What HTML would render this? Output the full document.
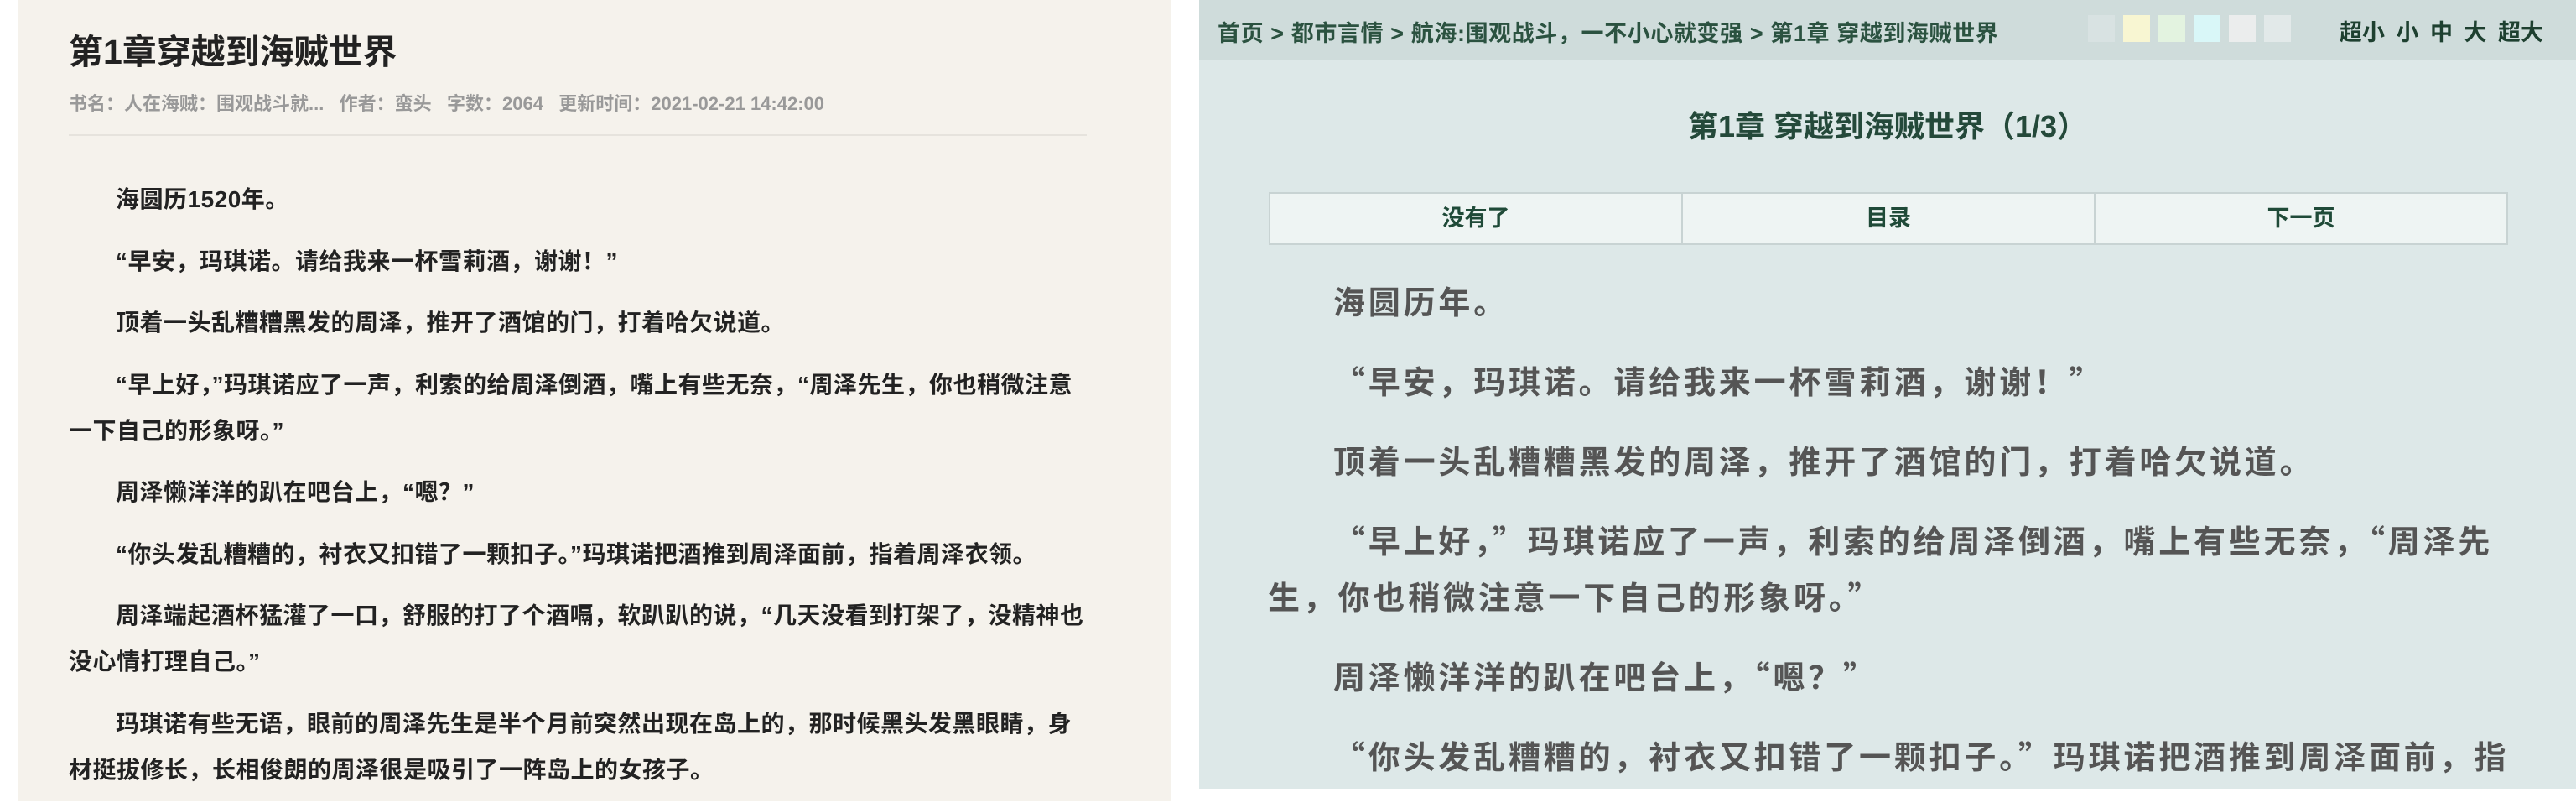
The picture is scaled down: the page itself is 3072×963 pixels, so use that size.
<!DOCTYPE html>
<html><head><meta charset="utf-8"><style>
*{margin:0;padding:0;box-sizing:border-box}
body{width:3072px;height:955px;background:#fff;position:relative;overflow:hidden;font-family:"Liberation Sans","Noto Sans CJK SC",sans-serif}
#L{position:absolute;left:22px;top:0;width:1374px;height:955px;background:#f5f2ec}
#L h1{position:absolute;left:60px;top:28px;font-size:41px;font-weight:bold;color:#222;white-space:nowrap}
#L .meta{position:absolute;left:60px;top:106px;font-size:22px;font-weight:bold;color:#999;white-space:nowrap}
#L .line{position:absolute;left:60px;top:160px;width:1214px;height:2px;background:#e6e3dd}
#L .txt{position:absolute;left:60px;top:210px;width:1260px}
#L p{font-size:28px;font-weight:bold;color:#222;line-height:55px;margin-bottom:18.5px;text-indent:56px;white-space:nowrap;letter-spacing:0.5px}
#R{position:absolute;left:1430px;top:0;width:1642px;height:940px;background:#dde8e8;overflow:hidden}
#bar{position:absolute;left:0;top:0;width:1642px;height:72px;background:#cfdcdb}
#bc{position:absolute;left:22px;top:18px;font-size:27px;font-weight:bold;color:#2b5240;white-space:nowrap;letter-spacing:0.6px}
.sw{position:absolute;top:18px;width:32px;height:32px}
#fs{position:absolute;left:1360px;top:17px;font-size:27px;font-weight:bold;color:#1e4030;white-space:nowrap;word-spacing:6px}
#R h2{position:absolute;left:0;width:1642px;text-align:center;top:122px;font-size:36px;font-weight:bold;color:#24493a}
#nav{position:absolute;left:83px;top:229px;width:1478px;height:63px;display:flex;border:2px solid #c8d3d3;background:#eef4f3}
#nav div{flex:1;text-align:center;line-height:59px;font-size:27px;font-weight:bold;color:#1f4a38}
#nav div+div{border-left:2px solid #c8d3d3}
#R .txt{position:absolute;left:82px;top:324px;width:1560px;font-family:"Noto Sans CJK SC",sans-serif}
#R p{font-size:38px;font-weight:bold;color:#555;line-height:67px;margin-bottom:28px;text-indent:78px;white-space:nowrap;letter-spacing:3.8px}
</style></head><body>
<div id="L">
<h1>第1章穿越到海贼世界</h1>
<div class="meta">书名：人在海贼：围观战斗就...&nbsp;&nbsp;&nbsp;作者：蛮头&nbsp;&nbsp;&nbsp;字数：2064&nbsp;&nbsp;&nbsp;更新时间：2021-02-21 14:42:00</div>
<div class="line"></div>
<div class="txt">
<p>海圆历1520年。</p>
<p>“早安，玛琪诺。请给我来一杯雪莉酒，谢谢！”</p>
<p>顶着一头乱糟糟黑发的周泽，推开了酒馆的门，打着哈欠说道。</p>
<p>“早上好，”玛琪诺应了一声，利索的给周泽倒酒，嘴上有些无奈，“周泽先生，你也稍微注意<br>一下自己的形象呀。”</p>
<p>周泽懒洋洋的趴在吧台上，“嗯？”</p>
<p>“你头发乱糟糟的，衬衣又扣错了一颗扣子。”玛琪诺把酒推到周泽面前，指着周泽衣领。</p>
<p>周泽端起酒杯猛灌了一口，舒服的打了个酒嗝，软趴趴的说，“几天没看到打架了，没精神也<br>没心情打理自己。”</p>
<p>玛琪诺有些无语，眼前的周泽先生是半个月前突然出现在岛上的，那时候黑头发黑眼睛，身<br>材挺拔修长，长相俊朗的周泽很是吸引了一阵岛上的女孩子。</p>
</div>
</div>
<div id="R">
<div id="bar"></div>
<div id="bc">首页 &gt; 都市言情 &gt; 航海:围观战斗，一不小心就变强 &gt; 第1章 穿越到海贼世界</div>
<div class="sw" style="left:1060px;background:#d8e2e2"></div>
<div class="sw" style="left:1102px;background:#f8f6d2"></div>
<div class="sw" style="left:1144px;background:#e3f3e0"></div>
<div class="sw" style="left:1186px;background:#d9f7f8"></div>
<div class="sw" style="left:1228px;background:#ebeded"></div>
<div class="sw" style="left:1270px;background:#e2e9e9"></div>
<div id="fs">超小 小 中 大 超大</div>
<h2>第1章 穿越到海贼世界（1/3）</h2>
<div id="nav"><div>没有了</div><div>目录</div><div>下一页</div></div>
<div class="txt">
<p>海圆历年。</p>
<p>“早安，玛琪诺。请给我来一杯雪莉酒，谢谢！”</p>
<p>顶着一头乱糟糟黑发的周泽，推开了酒馆的门，打着哈欠说道。</p>
<p>“早上好，”玛琪诺应了一声，利索的给周泽倒酒，嘴上有些无奈，“周泽先<br>生，你也稍微注意一下自己的形象呀。”</p>
<p>周泽懒洋洋的趴在吧台上，“嗯？”</p>
<p>“你头发乱糟糟的，衬衣又扣错了一颗扣子。”玛琪诺把酒推到周泽面前，指</p>
</div>
</div>
</body></html>
